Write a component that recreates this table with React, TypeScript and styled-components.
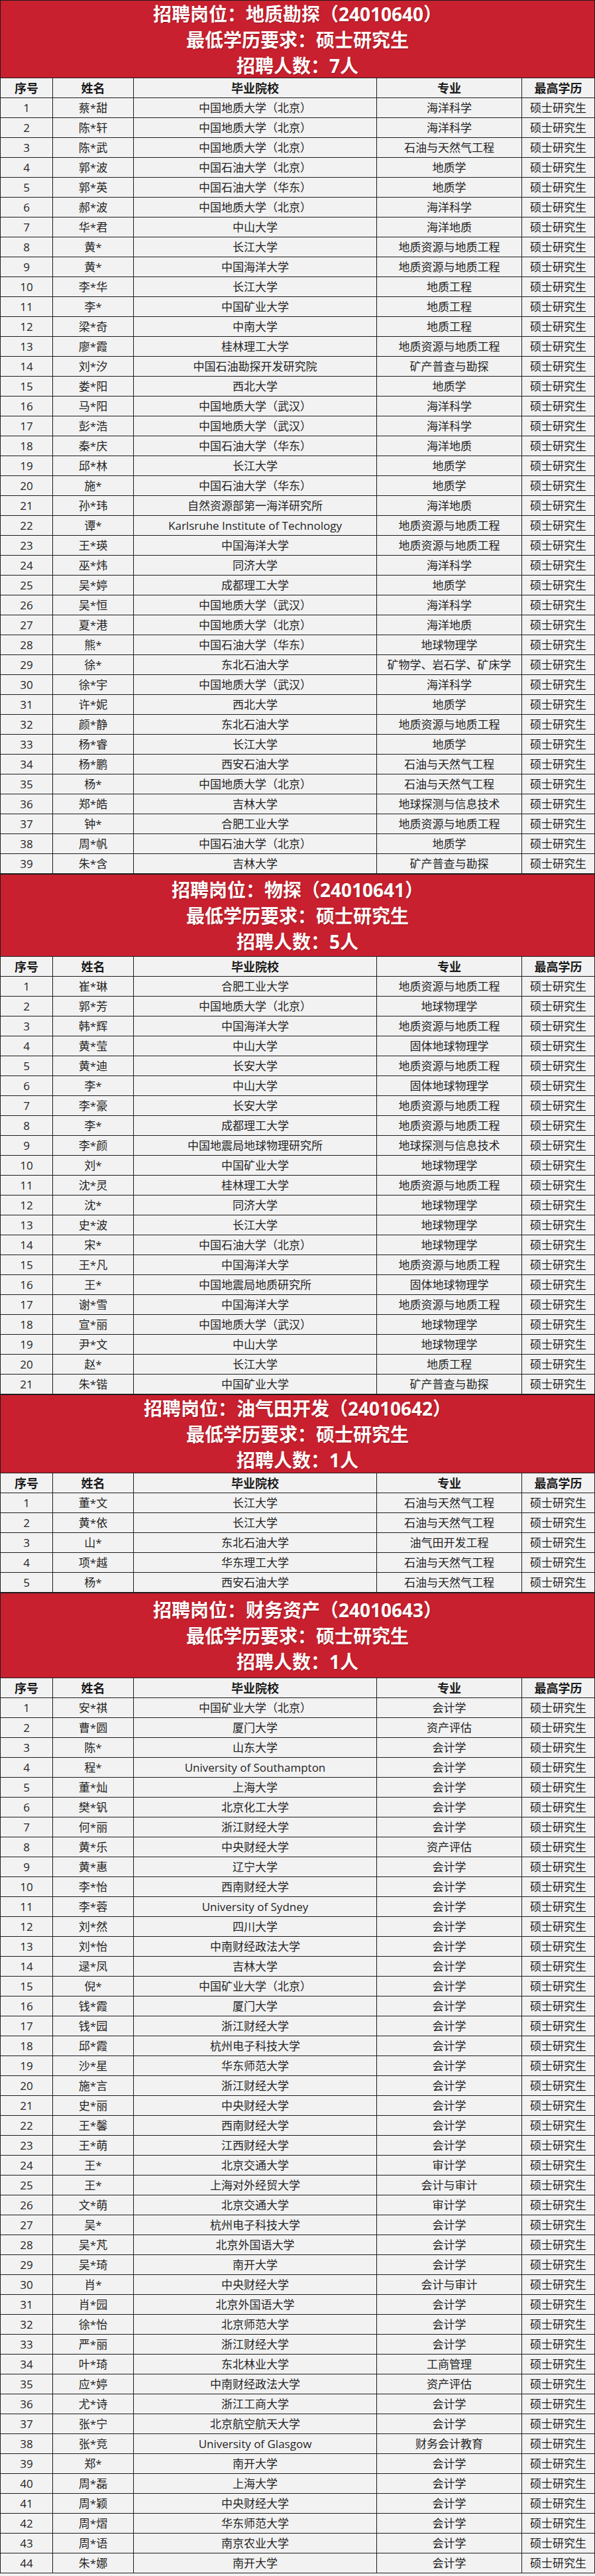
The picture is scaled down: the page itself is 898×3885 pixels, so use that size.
import React from "react";
import styled, { createGlobalStyle } from "styled-components";

const GlobalStyle = createGlobalStyle`
  html, body {
    margin: 0;
    padding: 0;
    background: #f2f2f2;
  }
  body {
    font-family: "Open Sans", "Noto Sans CJK SC", sans-serif;
    color: #222222;
  }
`;

const LINE = "#1c1c1c";

const Page = styled.main`
  width: 898px;
  display: flex;
  flex-direction: column;
`;

const Section = styled.section`
  box-sizing: border-box;
  width: 898px;
  border-top: 1px solid ${LINE};
  border-left: 1px solid ${LINE};
  border-right: 1px solid ${LINE};
`;

const Banner = styled.header<{ $h: number }>`
  height: ${(p) => p.$h}px;
  background: #c8202f;
  border-bottom: 1px solid ${LINE};
  display: flex;
  flex-direction: column;
  align-items: center;
  justify-content: center;
  color: #ffffff;
  font-weight: 700;
  font-size: 28px;
  line-height: 39px;
  padding-top: 2px;
  box-sizing: border-box;
  text-shadow: 1px 1px 1px rgba(60, 0, 0, 0.35);
`;

const BannerLine = styled.div`
  white-space: nowrap;
`;

const Row = styled.div<{ $head?: boolean }>`
  display: grid;
  grid-template-columns: 79px 122px 367px 219px 109px;
  height: 30px;
  box-sizing: border-box;
  border-bottom: 1px solid ${LINE};
  background: #f2f2f2;
  font-size: ${(p) => (p.$head ? "18px" : "17px")};
  font-weight: ${(p) => (p.$head ? 700 : 400)};
  color: ${(p) => (p.$head ? "#1a1a1a" : "#242424")};
`;

const Cell = styled.div`
  box-sizing: border-box;
  border-right: 1px solid ${LINE};
  display: flex;
  align-items: center;
  justify-content: center;
  white-space: nowrap;
  line-height: 1;
  &:last-child {
    border-right: none;
  }
`;

type Person = [string, string, string];

type Post = {
  title: string;
  code: string;
  count: number;
  height: number;
  people: Person[];
};

const BJ = "中国地质大学（北京）";
const WH = "中国地质大学（武汉）";
const SYBJ = "中国石油大学（北京）";
const SYHD = "中国石油大学（华东）";
const KYBJ = "中国矿业大学（北京）";

const posts: Post[] = [
  {
    title: "地质勘探",
    code: "24010640",
    count: 7,
    height: 117,
    people: [
      ["蔡*甜", BJ, "海洋科学"],
      ["陈*轩", BJ, "海洋科学"],
      ["陈*武", BJ, "石油与天然气工程"],
      ["郭*波", SYBJ, "地质学"],
      ["郭*英", SYHD, "地质学"],
      ["郝*波", BJ, "海洋科学"],
      ["华*君", "中山大学", "海洋地质"],
      ["黄*", "长江大学", "地质资源与地质工程"],
      ["黄*", "中国海洋大学", "地质资源与地质工程"],
      ["李*华", "长江大学", "地质工程"],
      ["李*", "中国矿业大学", "地质工程"],
      ["梁*奇", "中南大学", "地质工程"],
      ["廖*霞", "桂林理工大学", "地质资源与地质工程"],
      ["刘*汐", "中国石油勘探开发研究院", "矿产普查与勘探"],
      ["娄*阳", "西北大学", "地质学"],
      ["马*阳", WH, "海洋科学"],
      ["彭*浩", WH, "海洋科学"],
      ["秦*庆", SYHD, "海洋地质"],
      ["邱*林", "长江大学", "地质学"],
      ["施*", SYHD, "地质学"],
      ["孙*玮", "自然资源部第一海洋研究所", "海洋地质"],
      ["谭*", "Karlsruhe Institute of Technology", "地质资源与地质工程"],
      ["王*瑛", "中国海洋大学", "地质资源与地质工程"],
      ["巫*炜", "同济大学", "海洋科学"],
      ["吴*婷", "成都理工大学", "地质学"],
      ["吴*恒", WH, "海洋科学"],
      ["夏*港", BJ, "海洋地质"],
      ["熊*", SYHD, "地球物理学"],
      ["徐*", "东北石油大学", "矿物学、岩石学、矿床学"],
      ["徐*宇", WH, "海洋科学"],
      ["许*妮", "西北大学", "地质学"],
      ["颜*静", "东北石油大学", "地质资源与地质工程"],
      ["杨*睿", "长江大学", "地质学"],
      ["杨*鹏", "西安石油大学", "石油与天然气工程"],
      ["杨*", BJ, "石油与天然气工程"],
      ["郑*皓", "吉林大学", "地球探测与信息技术"],
      ["钟*", "合肥工业大学", "地质资源与地质工程"],
      ["周*帆", SYBJ, "地质学"],
      ["朱*含", "吉林大学", "矿产普查与勘探"],
    ],
  },
  {
    title: "物探",
    code: "24010641",
    count: 5,
    height: 124,
    people: [
      ["崔*琳", "合肥工业大学", "地质资源与地质工程"],
      ["郭*芳", BJ, "地球物理学"],
      ["韩*辉", "中国海洋大学", "地质资源与地质工程"],
      ["黄*莹", "中山大学", "固体地球物理学"],
      ["黄*迪", "长安大学", "地质资源与地质工程"],
      ["李*", "中山大学", "固体地球物理学"],
      ["李*豪", "长安大学", "地质资源与地质工程"],
      ["李*", "成都理工大学", "地质资源与地质工程"],
      ["李*颜", "中国地震局地球物理研究所", "地球探测与信息技术"],
      ["刘*", "中国矿业大学", "地球物理学"],
      ["沈*灵", "桂林理工大学", "地质资源与地质工程"],
      ["沈*", "同济大学", "地球物理学"],
      ["史*波", "长江大学", "地球物理学"],
      ["宋*", SYBJ, "地球物理学"],
      ["王*凡", "中国海洋大学", "地质资源与地质工程"],
      ["王*", "中国地震局地质研究所", "固体地球物理学"],
      ["谢*雪", "中国海洋大学", "地质资源与地质工程"],
      ["宣*丽", WH, "地球物理学"],
      ["尹*文", "中山大学", "地球物理学"],
      ["赵*", "长江大学", "地质工程"],
      ["朱*锴", "中国矿业大学", "矿产普查与勘探"],
    ],
  },
  {
    title: "油气田开发",
    code: "24010642",
    count: 1,
    height: 118,
    people: [
      ["董*文", "长江大学", "石油与天然气工程"],
      ["黄*依", "长江大学", "石油与天然气工程"],
      ["山*", "东北石油大学", "油气田开发工程"],
      ["项*越", "华东理工大学", "石油与天然气工程"],
      ["杨*", "西安石油大学", "石油与天然气工程"],
    ],
  },
  {
    title: "财务资产",
    code: "24010643",
    count: 1,
    height: 128,
    people: [
      ["安*祺", KYBJ, "会计学"],
      ["曹*圆", "厦门大学", "资产评估"],
      ["陈*", "山东大学", "会计学"],
      ["程*", "University of Southampton", "会计学"],
      ["董*灿", "上海大学", "会计学"],
      ["樊*钒", "北京化工大学", "会计学"],
      ["何*丽", "浙江财经大学", "会计学"],
      ["黄*乐", "中央财经大学", "资产评估"],
      ["黄*惠", "辽宁大学", "会计学"],
      ["李*怡", "西南财经大学", "会计学"],
      ["李*蓉", "University of Sydney", "会计学"],
      ["刘*然", "四川大学", "会计学"],
      ["刘*怡", "中南财经政法大学", "会计学"],
      ["逯*凤", "吉林大学", "会计学"],
      ["倪*", KYBJ, "会计学"],
      ["钱*霞", "厦门大学", "会计学"],
      ["钱*园", "浙江财经大学", "会计学"],
      ["邱*霞", "杭州电子科技大学", "会计学"],
      ["沙*星", "华东师范大学", "会计学"],
      ["施*言", "浙江财经大学", "会计学"],
      ["史*丽", "中央财经大学", "会计学"],
      ["王*馨", "西南财经大学", "会计学"],
      ["王*萌", "江西财经大学", "会计学"],
      ["王*", "北京交通大学", "审计学"],
      ["王*", "上海对外经贸大学", "会计与审计"],
      ["文*萌", "北京交通大学", "审计学"],
      ["吴*", "杭州电子科技大学", "会计学"],
      ["吴*芃", "北京外国语大学", "会计学"],
      ["吴*琦", "南开大学", "会计学"],
      ["肖*", "中央财经大学", "会计与审计"],
      ["肖*园", "北京外国语大学", "会计学"],
      ["徐*怡", "北京师范大学", "会计学"],
      ["严*丽", "浙江财经大学", "会计学"],
      ["叶*琦", "东北林业大学", "工商管理"],
      ["应*婷", "中南财经政法大学", "资产评估"],
      ["尤*诗", "浙江工商大学", "会计学"],
      ["张*宁", "北京航空航天大学", "会计学"],
      ["张*竞", "University of Glasgow", "财务会计教育"],
      ["郑*", "南开大学", "会计学"],
      ["周*磊", "上海大学", "会计学"],
      ["周*颖", "中央财经大学", "会计学"],
      ["周*熠", "华东师范大学", "会计学"],
      ["周*语", "南京农业大学", "会计学"],
      ["朱*娜", "南开大学", "会计学"],
    ],
  },
];

const HEADS = ["序号", "姓名", "毕业院校", "专业", "最高学历"];

function PostTable({ post }: { post: Post }) {
  return (
    <Section>
      <Banner $h={post.height}>
        <BannerLine>
          招聘岗位：{post.title}（{post.code}）
        </BannerLine>
        <BannerLine>最低学历要求：硕士研究生</BannerLine>
        <BannerLine>招聘人数：{post.count}人</BannerLine>
      </Banner>
      <Row $head>
        {HEADS.map((h) => (
          <Cell key={h}>{h}</Cell>
        ))}
      </Row>
      {post.people.map((p, i) => (
        <Row key={i}>
          <Cell>{i + 1}</Cell>
          <Cell>{p[0]}</Cell>
          <Cell>{p[1]}</Cell>
          <Cell>{p[2]}</Cell>
          <Cell>硕士研究生</Cell>
        </Row>
      ))}
    </Section>
  );
}

export default function App() {
  return (
    <>
      <GlobalStyle />
      <Page>
        {posts.map((p) => (
          <PostTable key={p.code} post={p} />
        ))}
      </Page>
    </>
  );
}
